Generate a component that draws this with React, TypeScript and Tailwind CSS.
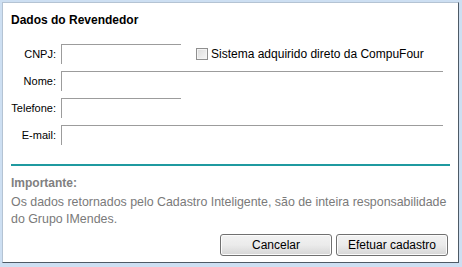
export default function App() {
  const font = { fontFamily: '"Liberation Sans", Arial, sans-serif' }

  return (
    <div
      className="w-[462px] h-[267px] bg-[#cddff2] pt-[2px] pl-[2px] pr-[3px] pb-[4px]"
      style={font}
    >
      <div className="h-full bg-white border-l border-t border-[#b4c3d3] border-r border-b border-r-[#4d5a66] border-b-[#4d5a66] flex flex-col pl-[8px] pr-[9px] pt-[9px]">
        {/* título */}
        <div className="text-[12px] leading-[16px] font-bold text-black">Dados do Revendedor</div>

        {/* formulário */}
        <div className="mt-[16px] flex flex-col gap-[7px] text-[11px] text-black">
          <div className="flex items-center">
            <span className="w-[45px] text-right">CNPJ:</span>
            <div className="ml-[5px] w-[120px] h-[20px] border-t border-l border-[#9c9c9c]" />
            <div className="ml-[15px] w-[12px] h-[12px] border border-[#8f8f8f] bg-gradient-to-br from-[#dcdcdc] to-[#f6f6f6] shadow-[inset_0_0_0_1px_#f4f4f4]" />
            <span className="ml-[3px] text-[12px]">Sistema adquirido direto da CompuFour</span>
          </div>
          <div className="flex items-center">
            <span className="w-[45px] text-right">Nome:</span>
            <div className="ml-[5px] w-[382px] h-[20px] border-t border-l border-[#9c9c9c]" />
          </div>
          <div className="flex items-center">
            <span className="w-[45px] text-right">Telefone:</span>
            <div className="ml-[5px] w-[120px] h-[20px] border-t border-l border-[#9c9c9c]" />
          </div>
          <div className="flex items-center">
            <span className="w-[45px] text-right">E-mail:</span>
            <div className="ml-[5px] w-[382px] h-[20px] border-t border-l border-[#9c9c9c]" />
          </div>
        </div>

        {/* divisor */}
        <div className="mt-[19px] h-[2px] w-[439px] bg-[#1f9aa0]" />

        {/* aviso */}
        <div className="mt-[9px] text-[12px] leading-[16px] font-bold text-[#808080]">Importante:</div>
        <p className="mt-[3px] w-[442px] whitespace-nowrap text-[12.4px] leading-[17px] text-[#7a7a7a]">
          Os dados retornados pelo Cadastro Inteligente, são de inteira responsabilidade
          <br />
          do Grupo IMendes.
        </p>

        {/* botões */}
        <div className="mt-auto mb-[6px] flex justify-end gap-[4px] pr-[1px]">
          <button className="w-[112px] h-[22px] rounded-[3px] border border-[#707070] bg-gradient-to-b from-[#f2f2f2] via-[#ebebeb] to-[#d6d6d6] text-[12px] text-black shadow-[inset_0_0_0_1px_#fcfcfc]">
            Cancelar
          </button>
          <button className="w-[112px] h-[22px] rounded-[3px] border border-[#707070] bg-gradient-to-b from-[#f2f2f2] via-[#ebebeb] to-[#d6d6d6] text-[12px] text-black shadow-[inset_0_0_0_1px_#fcfcfc]">
            Efetuar cadastro
          </button>
        </div>
      </div>
    </div>
  )
}
